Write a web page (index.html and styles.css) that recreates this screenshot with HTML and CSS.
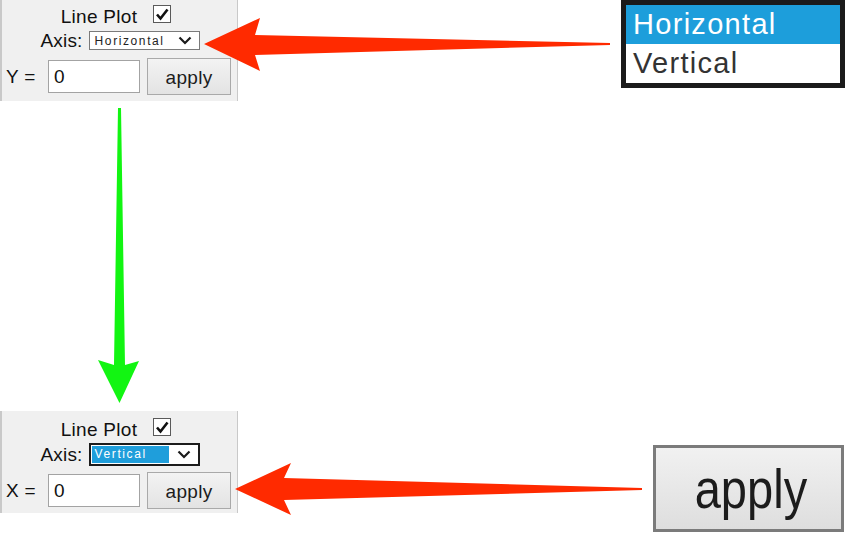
FILE: index.html
```html
<!DOCTYPE html>
<html>
<head>
<meta charset="utf-8">
<link rel="stylesheet" href="styles.css">
</head>
<body>
<div class="canvas">
  <section class="panel panel-top">
    <div class="row row-title">
      <span class="title">Line Plot</span>
      <span class="check"><svg width="16" height="16" viewBox="0 0 16 16"><path d="M3 8.5 L6.5 12.5 L13.5 3.5" fill="none" stroke="#111" stroke-width="2.6" stroke-linejoin="miter"/></svg></span>
    </div>
    <div class="row row-axis">
      <span class="lbl">Axis:</span>
      <div class="select">
        <span class="opt">Horizontal</span>
        <svg class="chev" width="14" height="9" viewBox="0 0 14 9"><path d="M1.5 1.5 L7 7 L12.5 1.5" fill="none" stroke="#1a1a1a" stroke-width="2.2"/></svg>
      </div>
    </div>
    <div class="row row-val">
      <span class="vlbl">Y =</span>
      <div class="input">0</div>
      <div class="btn">apply</div>
    </div>
  </section>

  <section class="panel panel-bottom">
    <div class="row row-title">
      <span class="title">Line Plot</span>
      <span class="check"><svg width="16" height="16" viewBox="0 0 16 16"><path d="M3 8.5 L6.5 12.5 L13.5 3.5" fill="none" stroke="#111" stroke-width="2.6" stroke-linejoin="miter"/></svg></span>
    </div>
    <div class="row row-axis">
      <span class="lbl">Axis:</span>
      <div class="select select-focus">
        <span class="opt opt-sel">Vertical</span>
        <svg class="chev" width="14" height="9" viewBox="0 0 14 9"><path d="M1.5 1.5 L7 7 L12.5 1.5" fill="none" stroke="#1a1a1a" stroke-width="2.2"/></svg>
      </div>
    </div>
    <div class="row row-val">
      <span class="vlbl">X =</span>
      <div class="input">0</div>
      <div class="btn">apply</div>
    </div>
  </section>

  <div class="popup">
    <div class="pop-item pop-active">Horizontal</div>
    <div class="pop-item">Vertical</div>
  </div>

  <div class="bigbtn"><span class="bigtext">apply</span></div>

  <svg class="arrows" width="853" height="534" viewBox="0 0 853 534">
    <polygon fill="#ff2a00" points="204,44 260,18 255,35 610,43 610,45 255,55 260,71"/>
    <polygon fill="#ff2a00" points="235,489 291,463 284,478 642,488 642,490 284,500 291,515"/>
    <polygon fill="#12f512" points="118,108 121,108 125,365 139,361 119.5,403 98,360 114,365"/>
  </svg>
</div>
</body>
</html>
```

FILE: styles.css
```css
body {
  margin: 0;
  background: #ffffff;
  font-family: "Liberation Sans", Arial, sans-serif;
  color: #111;
}

.canvas {
  position: relative;
  width: 853px;
  height: 534px;
  overflow: hidden;
}

.panel {
  position: absolute;
  left: 0;
  width: 238px;
  box-sizing: border-box;
  background: #f0f0f0;
  border-left: 2px solid #c9c9c9;
  border-right: 1px solid #c9c9c9;
  display: flex;
  flex-direction: column;
}

.panel-top {
  top: 0;
  height: 101px;
  padding-top: 5px;
}

.panel-bottom {
  top: 411px;
  height: 102px;
  padding-top: 7px;
}

.row {
  display: flex;
}

.row-title {
  height: 18px;
  justify-content: center;
  align-items: flex-start;
  gap: 16px;
  padding-right: 7px;
}

.title {
  font-size: 19px;
  line-height: 18px;
  letter-spacing: 0.3px;
  margin-top: 3px;
}

.check {
  width: 16px;
  height: 16px;
  border: 1px solid #5a5a5a;
  background: #fff;
  display: flex;
  align-items: center;
  justify-content: center;
}

.row-axis {
  justify-content: center;
  align-items: center;
  gap: 6px;
  margin-top: 8px;
  padding-left: 1px;
}

.panel-bottom .row-axis {
  margin-top: 7px;
}

.lbl {
  font-size: 19px;
  letter-spacing: 0.2px;
  line-height: 19px;
}

.select {
  width: 111px;
  height: 19px;
  box-sizing: border-box;
  border: 1px solid #7a7a7a;
  background: #fff;
  display: flex;
  align-items: center;
  padding-left: 5px;
  padding-right: 7px;
  justify-content: space-between;
}

.select-focus {
  height: 23px;
  border: 2px solid #1c1c1c;
  padding-left: 1px;
}

.opt {
  font-size: 12px;
  letter-spacing: 1.6px;
  color: #222;
}

.opt-sel {
  width: 74px;
  height: 17px;
  line-height: 17px;
  background: #1f9edb;
  color: #fff;
  padding-left: 3px;
}

.row-val {
  align-items: center;
  margin-top: 8px;
  padding-left: 4px;
}

.panel-bottom .row-val {
  margin-top: 6px;
}

.vlbl {
  width: 42px;
  font-size: 19px;
  letter-spacing: 0.3px;
}

.input {
  width: 92px;
  height: 33px;
  box-sizing: border-box;
  border: 1px solid #a3a3a3;
  background: #fff;
  font-size: 19px;
  line-height: 31px;
  padding-left: 5px;
}

.btn {
  margin-left: 7px;
  width: 84px;
  height: 37px;
  box-sizing: border-box;
  border: 1px solid #a9a9a9;
  background: linear-gradient(#f3f3f3, #e3e3e3);
  font-size: 19px;
  letter-spacing: 0.3px;
  line-height: 37px;
  text-align: center;
  color: #1c1c1c;
}

.popup {
  position: absolute;
  left: 621px;
  top: 0;
  width: 224px;
  height: 88px;
  box-sizing: border-box;
  border: 5px solid #1b1b1b;
  background: #fff;
  display: flex;
  flex-direction: column;
}

.pop-item {
  height: 39px;
  line-height: 39px;
  font-size: 29px;
  letter-spacing: 1.3px;
  padding-left: 7px;
  color: #333;
}

.pop-active {
  background: #1d9edb;
  color: #fff;
}

.bigbtn {
  position: absolute;
  left: 653px;
  top: 445px;
  width: 191px;
  height: 87px;
  box-sizing: border-box;
  border: 3px solid #7b7b7b;
  background: linear-gradient(#f1f1f1, #dedede);
  display: flex;
  justify-content: center;
}

.bigtext {
  display: inline-block;
  font-size: 56px;
  line-height: 81px;
  color: #1c1c1c;
  margin-left: 4px;
  transform: scaleX(0.84);
}

.arrows {
  position: absolute;
  left: 0;
  top: 0;
  pointer-events: none;
}
```
